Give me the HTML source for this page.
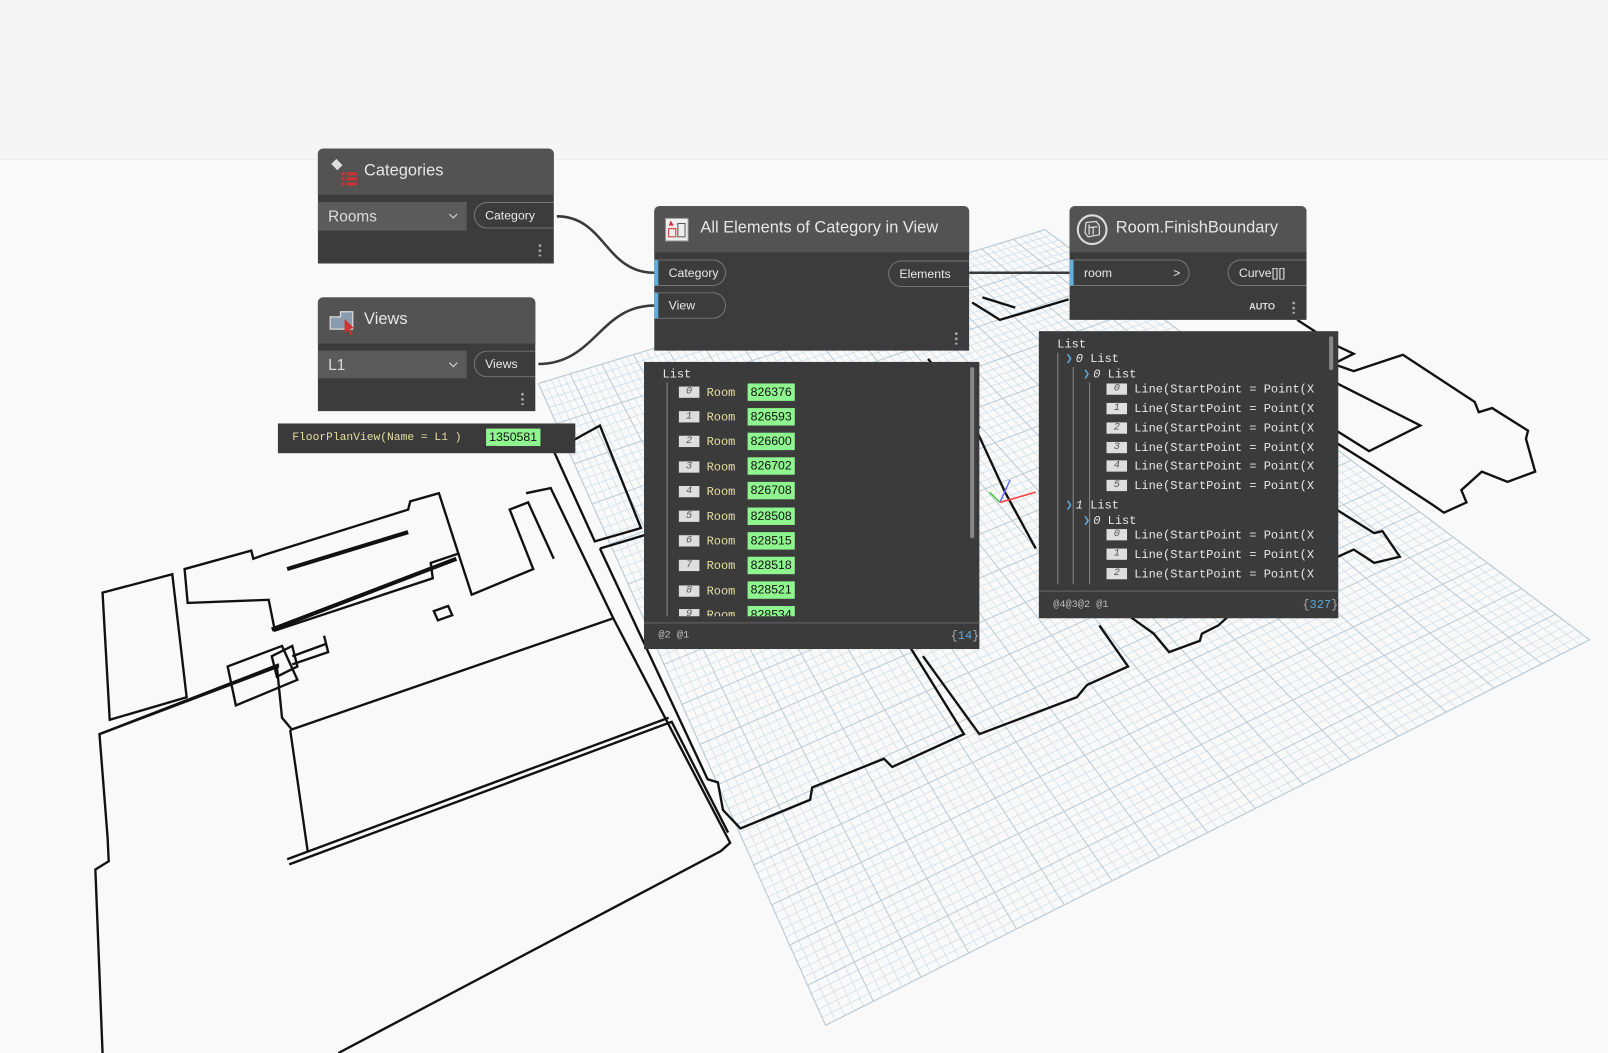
<!DOCTYPE html>
<html><head><meta charset="utf-8">
<style>
html,body{margin:0;padding:0;background:#f9f9f9;overflow:hidden;width:1608px;height:1053px}
#w{position:absolute;left:0;top:0;width:1568px;height:1027px;transform:scale(1.02551,1.02532);transform-origin:0 0;font-family:"Liberation Sans",sans-serif}
.top{position:absolute;left:0;top:0;width:1568px;height:155px;background:#f5f5f5;border-bottom:1px solid #eee}
.node{position:absolute;background:#3c3c3c;color:#eee}
.hd{position:absolute;left:0;top:0;right:0;height:45px;background:#535353;border-radius:5px 5px 0 0}
.hd span{position:absolute;left:45px;top:13px;font-size:16px;color:#e6e6e6}
.dd{position:absolute;background:#5b5b5b;color:#ddd;font-size:15px;padding:6px 10px;box-sizing:border-box}
.dd:after{content:"";position:absolute;right:10px;top:9px;width:5px;height:5px;border-right:1.5px solid #ddd;border-bottom:1.5px solid #ddd;transform:rotate(45deg)}
.port{position:absolute;height:26px;border:1px solid #777;box-sizing:border-box;font-size:12px;color:#e8e8e8;line-height:24px;padding-left:10px}
.pin{border-radius:0 13px 13px 0;border-left:4px solid #5fb0dc}
.pout{border-radius:13px 0 0 13px;border-right:none}
.dots{position:absolute;width:3px;height:13px;background:radial-gradient(circle,#aaa 1.2px,transparent 1.5px) 0 0/3px 5px repeat-y}
.watch{position:absolute;background:#3b3b3b;font-family:"Liberation Mono",monospace;font-size:11.7px;color:#e8e8e8}
.r{position:absolute;height:14px;line-height:14px;white-space:nowrap}
.ix{display:inline-block;width:20px;background:#dedede;color:#555;font-style:italic;text-align:center;box-sizing:border-box;font-size:10px;height:11px;line-height:11px;vertical-align:middle}
.gr{position:absolute;background:#8ff58f;color:#111;font-family:"Liberation Sans",sans-serif;font-size:12px;padding:0 3px;height:17px;line-height:17px}
.rm{color:#e6dfa0}
.ft{position:absolute;left:0;right:0;border-top:1px solid #666}
.ch{color:#5ea7d8;font-weight:bold;margin-right:3px}
</style></head><body>
<div id="w">
<div class="top"></div>
<svg id="g" width="1568" height="1027" style="position:absolute;left:0;top:0">
<g id="grid"></g>
<g fill="none" stroke="#111" stroke-width="2.3" stroke-linejoin="miter">
<path d="M100,1027 L93,848 L106,840 L105,818 L97,716 L272,648"/>
<path d="M97,716 L272,650 M283,712 L598,603 L712,822 L703,830 L330,1027"/>
<path d="M283,712 L300,830 M280,838 L652,700 M282,843 L655,704 L710,812"/>
<path d="M100,578 L168,560 L182,680 L107,702 Z"/>
<path d="M183,588 L180,555 L245,537 L247,545 L258,541 L398,497 L400,489 L428,481 L447,540 L420,549 L422,564 L268,615 L262,585 Z"/>
<path d="M280,555 L398,519" stroke-width="4"/>
<path d="M265,614 L445,545" stroke-width="4"/>
<path d="M447,540 L460,580 L520,555 L497,497 L515,490 L540,545 M513,481 L537,476 L598,603"/>
<path d="M423,596 L437,591 L441,600 L427,605 Z"/>
<path d="M222,650 L275,630 L290,663 L230,688 Z M265,640 L285,630 L290,650 L270,660 Z M285,640 L318,628 L316,620 L320,636 L285,648"/>
<path d="M270,650 L275,700 L285,712"/>
<path d="M540,440 L585,415 L625,515 L580,528 Z"/>
<path d="M585,535 L635,520 M585,535 L690,760 L700,763 L705,790 L722,808 L790,780 L792,768 L862,740 L870,748 L940,716 L888,632"/>
<path d="M900,640 L955,716 L1050,680 L1060,668 L1100,650 L1072,610"/>
<path d="M950,415 L980,480 L1010,535"/>
<path d="M1100,600 L1125,618 L1140,636 L1170,625 L1172,618 L1188,610 L1210,590"/>
<path d="M948,295 L975,312 L1042,292 M958,290 L990,300"/>
<path d="M1265,312 L1305,338 L1320,345 L1300,355 L1320,362 L1368,346 L1438,392 L1442,402 L1455,398 L1490,420 L1488,428 L1497,460 L1470,470 L1445,460 L1425,478 L1430,490 L1408,500 L1398,493 L1340,455 L1300,430"/>
<path d="M1300,372 L1385,415 L1335,440 L1300,418"/>
<path d="M1300,495 L1340,520 L1348,518 L1365,543 L1340,549 L1320,536 L1300,545"/>
<path d="M905,350 L945,400 L955,418"/>
</g>
<g stroke-width="1.5"><path d="M975,490 L985,468" stroke="#6a6aff"/><path d="M975,490 L1010,480" stroke="#ff4040"/><path d="M975,490 L965,480" stroke="#4c4"/></g>
<g fill="none" stroke="#3a3a3a" stroke-width="2.5">
<path d="M543,211 C590,211 590,266 638,266"/>
<path d="M525,355 C580,355 585,298 638,298"/>
<path d="M945,266 L1043,266"/>
</g>
</svg>

<div class="node" style="left:310px;top:145px;width:230px;height:112px;border-radius:5px 5px 0 0">
<div class="hd"><svg width="30" height="30" style="position:absolute;left:10px;top:9px"><path d="M3,6 L8,1 L14,7 L9,12 Z" fill="#ddd"/><rect x="13" y="14" width="3" height="3" fill="#c33"/><rect x="18" y="14" width="10" height="3" fill="#c33"/><rect x="13" y="19" width="3" height="3" fill="#c33"/><rect x="18" y="19" width="10" height="3" fill="#c33"/><rect x="13" y="24" width="3" height="3" fill="#c33"/><rect x="18" y="24" width="10" height="3" fill="#c33"/></svg><span>Categories</span></div>
<div class="dd" style="left:0;top:52px;width:145px;height:28px">Rooms</div>
<div class="port pout" style="left:152px;top:52px;width:78px">Category</div>
<div class="dots" style="left:215px;top:92px"></div>
</div>
<div class="node" style="left:310px;top:290px;width:212px;height:111px;border-radius:5px 5px 0 0">
<div class="hd"><svg width="30" height="30" style="position:absolute;left:10px;top:9px"><path d="M2,10 L12,10 L12,5 L24,5 L24,22 L2,22 Z" fill="#8a9bb0" stroke="#ddd" stroke-width="1.2"/><path d="M16,12 L16,26 L19,23 L22,28 L24,27 L21,22 L25,21 Z" fill="#c33"/></svg><span>Views</span></div>
<div class="dd" style="left:0;top:52px;width:145px;height:27px">L1</div>
<div class="port pout" style="left:152px;top:52px;width:60px">Views</div>
<div class="dots" style="left:198px;top:92px"></div>
</div>
<div style="position:absolute;left:271px;top:413px;width:290px;height:29px;background:#3a3a3a;font-family:'Liberation Mono',monospace;font-size:11px;color:#e6dfa0">
<span style="position:absolute;left:14px;top:8px">FloorPlanView(Name = L1 )</span>
<span class="gr" style="left:203px;top:5px">1350581</span></div>
<div class="node" style="left:638px;top:201px;width:307px;height:141px;border-radius:5px 5px 0 0">
<div class="hd"><svg width="28" height="28" style="position:absolute;left:8px;top:9px"><rect x="3" y="3" width="22" height="22" fill="#eee" stroke="#999"/><rect x="6" y="13" width="7" height="8" fill="none" stroke="#c33"/><rect x="15" y="8" width="7" height="13" fill="none" stroke="#555"/><path d="M8,5 L11,10 L6,10 Z" fill="#c33"/></svg><span>All Elements of Category in View</span></div>
<div class="port pin" style="left:0;top:52px;width:70px">Category</div>
<div class="port pin" style="left:0;top:84px;width:70px">View</div>
<div class="port pout" style="left:228px;top:53px;width:79px">Elements</div>
<div class="dots" style="left:293px;top:122px"></div>
</div>
<div class="watch" style="left:628px;top:353px;width:327px;height:280px">
<div class="r" style="left:18px;top:5px">List</div>
<div style="position:absolute;left:22px;top:20px;width:1px;height:228px;background:#888"></div>
<div style="position:absolute;right:5px;top:5px;width:4px;height:167px;background:#888;border-radius:2px"></div>
<div class="r" style="left:34px;top:23px"><span class="ix">0</span> <span class="rm">Room</span></div><div class="gr" style="left:101px;top:21px">826376</div>
<div class="r" style="left:34px;top:47px"><span class="ix">1</span> <span class="rm">Room</span></div><div class="gr" style="left:101px;top:45px">826593</div>
<div class="r" style="left:34px;top:71px"><span class="ix">2</span> <span class="rm">Room</span></div><div class="gr" style="left:101px;top:69px">826600</div>
<div class="r" style="left:34px;top:96px"><span class="ix">3</span> <span class="rm">Room</span></div><div class="gr" style="left:101px;top:93px">826702</div>
<div class="r" style="left:34px;top:120px"><span class="ix">4</span> <span class="rm">Room</span></div><div class="gr" style="left:101px;top:117px">826708</div>
<div class="r" style="left:34px;top:144px"><span class="ix">5</span> <span class="rm">Room</span></div><div class="gr" style="left:101px;top:142px">828508</div>
<div class="r" style="left:34px;top:168px"><span class="ix">6</span> <span class="rm">Room</span></div><div class="gr" style="left:101px;top:166px">828515</div>
<div class="r" style="left:34px;top:192px"><span class="ix">7</span> <span class="rm">Room</span></div><div class="gr" style="left:101px;top:190px">828518</div>
<div class="r" style="left:34px;top:217px"><span class="ix">8</span> <span class="rm">Room</span></div><div class="gr" style="left:101px;top:214px">828521</div>
<div style="position:absolute;left:34px;top:238px;height:10px;overflow:hidden;width:200px"><div class="r" style="left:0;top:2px"><span class="ix">9</span> <span class="rm">Room</span></div><div class="gr" style="left:67px;top:0">828534</div></div>
<div class="ft" style="top:254px"></div>
<div class="r" style="left:14px;top:261px;font-size:10px;color:#bbb">@2 @1</div>
<div class="r" style="right:0;top:260px;color:#5ea7d8"><span style="color:#aaa">{</span>14<span style="color:#aaa">}</span></div>
</div>
<div class="node" style="left:1043px;top:201px;width:231px;height:111px;border-radius:5px 5px 0 0">
<div class="hd"><svg width="34" height="34" style="position:absolute;left:5px;top:6px"><circle cx="17" cy="17" r="14" fill="none" stroke="#ddd" stroke-width="2"/><path d="M11,10 L21,9 L24,13 L24,22 L13,24 L10,20 Z M14,12 L14,22 M14,15 L22,14 M18,15 L18,22" fill="none" stroke="#ddd" stroke-width="1.2"/></svg><span>Room.FinishBoundary</span></div>
<div class="port pin" style="left:0;top:52px;width:117px">room<span style="position:absolute;right:8px">&gt;</span></div>
<div class="port pout" style="left:154px;top:52px;width:77px">Curve[][]</div>
<div style="position:absolute;left:175px;top:93px;font-size:9px;color:#ddd;font-weight:bold">AUTO</div>
<div class="dots" style="left:217px;top:92px"></div>
</div>
<div class="watch" style="left:1013px;top:323px;width:292px;height:280px">
<div class="r" style="left:18px;top:6px">List</div>
<div style="position:absolute;left:18px;top:21px;width:1px;height:226px;background:#888"></div>
<div style="position:absolute;left:33px;top:35px;width:1px;height:212px;background:#888"></div>
<div style="position:absolute;left:49px;top:50px;width:1px;height:197px;background:#888"></div>
<div style="position:absolute;right:5px;top:5px;width:4px;height:33px;background:#888;border-radius:2px"></div>
<div class="r" style="left:26px;top:20px"><span class="ch">&#10095;</span><i>0</i> List</div>
<div class="r" style="left:43px;top:35px"><span class="ch">&#10095;</span><i>0</i> List</div>
<div class="r" style="left:66px;top:50px"><span class="ix">0</span> Line(StartPoint = Point(X</div>
<div class="r" style="left:66px;top:69px"><span class="ix">1</span> Line(StartPoint = Point(X</div>
<div class="r" style="left:66px;top:88px"><span class="ix">2</span> Line(StartPoint = Point(X</div>
<div class="r" style="left:66px;top:107px"><span class="ix">3</span> Line(StartPoint = Point(X</div>
<div class="r" style="left:66px;top:125px"><span class="ix">4</span> Line(StartPoint = Point(X</div>
<div class="r" style="left:66px;top:144px"><span class="ix">5</span> Line(StartPoint = Point(X</div>
<div class="r" style="left:26px;top:163px"><span class="ch">&#10095;</span><i>1</i> List</div>
<div class="r" style="left:43px;top:178px"><span class="ch">&#10095;</span><i>0</i> List</div>
<div class="r" style="left:66px;top:192px"><span class="ix">0</span> Line(StartPoint = Point(X</div>
<div class="r" style="left:66px;top:211px"><span class="ix">1</span> Line(StartPoint = Point(X</div>
<div class="r" style="left:66px;top:230px"><span class="ix">2</span> Line(StartPoint = Point(X</div>
<div class="ft" style="top:253px"></div>
<div class="r" style="left:14px;top:261px;font-size:10px;color:#bbb">@4@3@2 @1</div>
<div class="r" style="right:0;top:260px;color:#5ea7d8"><span style="color:#aaa">{</span>327<span style="color:#aaa">}</span></div>
</div>
</div>
<script>
(function(){
var L=[525,374],T=[1019,224],R=[1550,624],B=[805,1000];
function P(u,v){var x=(1-u)*(1-v)*L[0]+u*(1-v)*T[0]+u*v*R[0]+(1-u)*v*B[0];var y=(1-u)*(1-v)*L[1]+u*(1-v)*T[1]+u*v*R[1]+(1-u)*v*B[1];return x.toFixed(1)+","+y.toFixed(1);}
var N=80,s="",s2="";
for(var i=0;i<=N;i++){var t=i/N;var a="M"+P(t,0)+"L"+P(t,1)+"M"+P(0,t)+"L"+P(1,t);if(i%5==0)s2+=a;else s+=a;}
document.getElementById("grid").innerHTML='<path d="'+s+'" stroke="#d5e0e7" stroke-width="0.8" fill="none"/><path d="'+s2+'" stroke="#bccbd5" stroke-width="1" fill="none"/><path d="M'+P(0,0)+'L'+P(1,0)+'L'+P(1,1)+'L'+P(0,1)+'Z" fill="none" stroke="#bccbd5"/>';
})();
</script>
</body></html>
